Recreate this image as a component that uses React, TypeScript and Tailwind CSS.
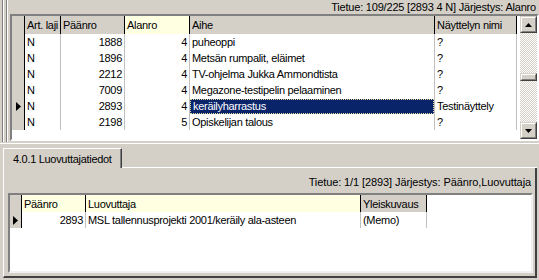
import React from "react";

const topCols = [
  { w: 36, label: "Art. laji", align: "left", hl: false },
  { w: 64, label: "Päänro", align: "right", hl: false },
  { w: 65, label: "Alanro", align: "right", hl: true },
  { w: 245, label: "Aihe", align: "left", hl: false },
  { w: 82, label: "Näyttelyn nimi", align: "left", hl: false },
];

const topRows = [
  ["N", "1888", "4", "puheoppi", "?"],
  ["N", "1896", "4", "Metsän rumpalit, eläimet", "?"],
  ["N", "2212", "4", "TV-ohjelma Jukka Ammondtista", "?"],
  ["N", "7009", "4", "Megazone-testipelin pelaaminen", "?"],
  ["N", "2893", "4", "keräilyharrastus", "Testinäyttely"],
  ["N", "2198", "5", "Opiskelijan talous", "?"],
];

const botCols = [
  { w: 64, label: "Päänro", align: "right", hl: true },
  { w: 275, label: "Luovuttaja", align: "left", hl: true },
  { w: 66, label: "Yleiskuvaus", align: "left", hl: false },
];

function Arrow({ up }: { up: boolean }) {
  return (
    <svg width="7" height="4" viewBox="0 0 7 4">
      {up ? <polygon points="3.5,0 7,4 0,4" fill="#000" /> : <polygon points="0,0 7,0 3.5,4" fill="#000" />}
    </svg>
  );
}

function Btn({ children, h }: { children?: React.ReactNode; h: number }) {
  return (
    <div
      className="border border-t-[#d4d0c8] border-l-[#d4d0c8] border-b-[#404040] border-r-[#404040] w-[17px]"
      style={{ height: h }}
    >
      <div className="w-full h-full border border-t-white border-l-white border-b-[#808080] border-r-[#808080] bg-[#d4d0c8] flex items-center justify-center">
        {children}
      </div>
    </div>
  );
}

function Indicator() {
  return (
    <svg width="6" height="9" viewBox="0 0 6 9">
      <polygon points="0,0 5,4.5 0,9" fill="#000" />
    </svg>
  );
}

export default function App() {
  return (
    <div className="w-[539px] h-[280px] bg-[#d4d0c8] overflow-hidden font-['Liberation_Sans',Arial,sans-serif] text-[11px] leading-none text-black">
      {/* TOP SECTION */}
      <div className="flex h-[142px]">
        <div className="w-[10px] h-full flex">
          <div className="w-[2px] bg-[#d4d0c8]" />
          <div className="w-[1px] bg-[#808080]" />
          <div className="w-[1px] bg-white" />
          <div className="w-[2px] bg-[#d4d0c8]" />
          <div className="w-[1px] bg-[#808080]" />
          <div className="w-[1px] bg-white" />
          <div className="w-[2px] bg-[#d4d0c8]" />
        </div>
        <div className="flex-1 flex flex-col">
          <div className="h-[14px] flex items-center justify-end pr-[3px] tracking-[-0.2px]">
            Tietue: 109/225 [2893 4 N] Järjestys: Alanro
          </div>
          <div className="h-[127px] border-2 border-t-[#808080] border-l-[#808080] border-b-white border-r-white">
            <div className="h-full flex bg-white">
              <div className="flex-1 flex flex-col">
                {/* header */}
                <div className="flex h-[18px]">
                  <div className="w-[13px] bg-[#d4d0c8] border-r border-black" />
                  {topCols.map((c) => (
                    <div
                      key={c.label}
                      className={`border-r border-black flex items-center pl-[2px] pt-[1px] tracking-[-0.3px] ${c.hl ? "bg-[#ffffe1]" : "bg-[#d4d0c8]"}`}
                      style={{ width: c.w }}
                    >
                      {c.label}
                    </div>
                  ))}
                </div>
                {topRows.map((r, i) => (
                  <div key={i} className="flex h-[16px]">
                    <div className="w-[13px] bg-[#d4d0c8] border-r border-black flex items-center pl-[4px]">
                      {i === 4 ? <Indicator /> : null}
                    </div>
                    {topCols.map((c, j) => {
                      const sel = i === 4 && j === 3;
                      return (
                        <div
                          key={j}
                          className="border-r border-[#c0c0c0] pt-[1px] h-full tracking-[-0.3px]"
                          style={{ width: c.w }}
                        >
                          <div
                            className={`h-full flex items-center px-[2px] whitespace-nowrap overflow-hidden ${
                              c.align === "right" ? "justify-end" : "justify-start"
                            } ${sel ? "bg-[#0a246a] text-white border border-dotted border-[#e8dca0] px-[1px]" : ""}`}
                          >
                            {r[j]}
                          </div>
                        </div>
                      );
                    })}
                  </div>
                ))}
              </div>
              {/* scrollbar */}
              <div className="w-[17px] flex flex-col ml-[2px]">
                <Btn h={17}>
                  <Arrow up />
                </Btn>
                <div className="h-[40px] bg-[image:repeating-conic-gradient(#ffffff_0_25%,#d4d0c8_0_50%)] bg-[length:2px_2px]" />
                <Btn h={8} />
                <div className="flex-1 bg-[image:repeating-conic-gradient(#ffffff_0_25%,#d4d0c8_0_50%)] bg-[length:2px_2px]" />
                <Btn h={17}>
                  <Arrow up={false} />
                </Btn>
              </div>
            </div>
          </div>
        </div>
      </div>

      {/* LOWER SECTION */}
      <div className="h-[138px] flex flex-col">
        <div className="h-[1px] mt-[1px] bg-white" />
        <div className="h-[4px]" />
        <div className="ml-[3px] w-[534px] flex flex-col">
          <div className="flex h-[20px]">
            <div className="w-[119px] border-t border-l border-white border-r border-r-[#404040] shadow-[inset_-1px_0_#808080] flex items-center pl-[9px] pt-[1px] tracking-[-0.3px]">
              4.0.1 Luovuttajatiedot
            </div>
            <div className="flex-1 border-b border-white" />
          </div>
          <div className="h-[110px] border-l border-white border-r-2 border-r-[#404040] border-b-2 border-b-[#404040] flex flex-col">
            <div className="h-[25px] flex items-center justify-end pr-[4px] pt-[4px] tracking-[-0.1px]">
              Tietue: 1/1 [2893] Järjestys: Päänro,Luovuttaja
            </div>
            <div className="ml-[4px] w-[525px] h-[80px] border-2 border-t-[#808080] border-l-[#808080] border-b-[#f0f0f0] border-r-[#f0f0f0] bg-white flex flex-col">
              <div className="flex h-[17px]">
                <div className="w-[12px] bg-[#d4d0c8] border-r border-black" />
                {botCols.map((c) => (
                  <div
                    key={c.label}
                    className={`border-r border-black flex items-center pl-[2px] pt-[1px] tracking-[-0.3px] ${c.hl ? "bg-[#ffffe1]" : "bg-[#d4d0c8]"}`}
                    style={{ width: c.w }}
                  >
                    {c.label}
                  </div>
                ))}
              </div>
              <div className="flex h-[16px]">
                <div className="w-[12px] bg-[#d4d0c8] border-r border-black flex items-center pl-[3px]">
                  <Indicator />
                </div>
                {["2893", "MSL tallennusprojekti 2001/keräily ala-asteen", "(Memo)"].map((t, j) => (
                  <div
                    key={j}
                    className={`border-r border-[#c0c0c0] flex items-center px-[2px] pt-[1px] whitespace-nowrap tracking-[-0.3px] ${
                      botCols[j].align === "right" ? "justify-end" : ""
                    }`}
                    style={{ width: botCols[j].w }}
                  >
                    {t}
                  </div>
                ))}
              </div>
            </div>
          </div>
        </div>
      </div>
    </div>
  );
}
